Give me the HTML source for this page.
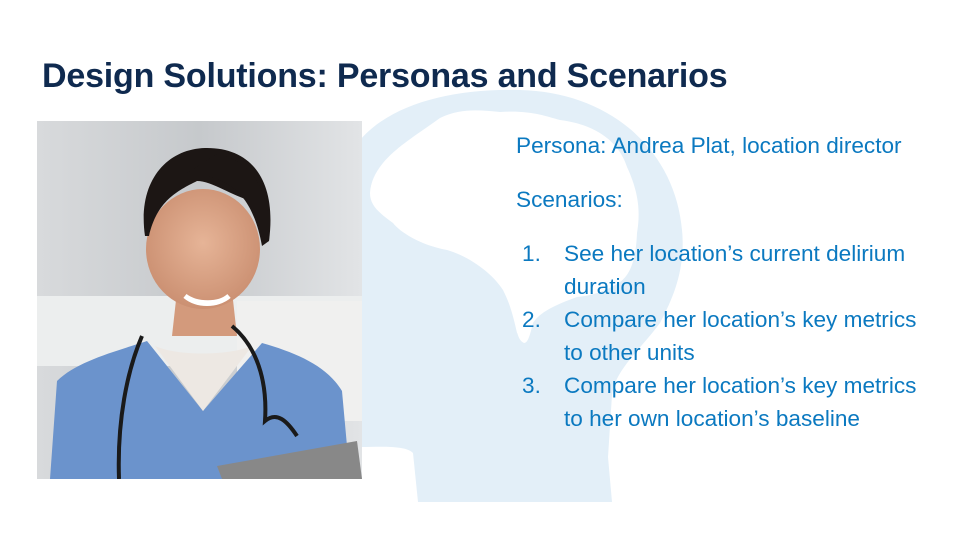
<!DOCTYPE html>
<html><head><meta charset="utf-8"><style>
html,body{margin:0;padding:0}
body{width:960px;height:540px;position:relative;overflow:hidden;background:#fff;font-family:"Source Sans Pro","Liberation Sans",sans-serif}
h1{position:absolute;left:42px;top:57px;margin:0;font-size:34px;font-weight:bold;color:#0f2a4f;letter-spacing:-0.2px}
.t{position:absolute;color:#0b79c0;font-size:22.6px;line-height:33px;white-space:nowrap}
</style></head><body>
<svg width="960" height="540" style="position:absolute;left:0;top:0">
<path d="M360 447 L360 140 C390 105 450 88 520 90 C610 92 675 150 682 230 C686 270 672 300 660 323 C640 350 615 370 612 395 L608 457 L612 502 L418 502 L413 453 C405 445 380 447 360 447 Z" fill="#e3eff8"/>
<path d="M370 193 C372 160 410 140 440 118 C460 108 480 110 500 112 C530 110 545 116 560 120 C600 125 620 145 627 167 C640 195 640 215 637 233 C636 260 630 275 620 282 C600 295 585 296 577 297 C555 305 540 312 533 323 C530 335 528 343 524 343 C518 340 518 333 517 333 C512 310 508 300 503 290 C490 270 465 255 447 250 C420 245 400 232 393 223 C378 212 370 205 370 193 Z" fill="#fff"/>
</svg>
<svg width="325" height="358" style="position:absolute;left:37px;top:121px" viewBox="0 0 325 358">
<defs>
<linearGradient id="bg" x1="0" x2="1"><stop offset="0" stop-color="#d8dadc"/><stop offset="0.5" stop-color="#c6c9cc"/><stop offset="1" stop-color="#e2e4e6"/></linearGradient>
<radialGradient id="sk" cx="0.5" cy="0.45" r="0.6"><stop offset="0" stop-color="#e6b497"/><stop offset="1" stop-color="#c98d6f"/></radialGradient>
</defs>
<rect width="325" height="358" fill="url(#bg)"/>
<rect x="0" y="175" width="325" height="70" fill="#eceeee"/>
<rect x="200" y="180" width="125" height="120" fill="#f0f0ef"/>
<path d="M140 170 L195 170 L200 215 L135 215 Z" fill="#d39a7c"/>
<ellipse cx="166" cy="128" rx="57" ry="60" fill="url(#sk)"/>
<path d="M108 115 C100 60 130 28 168 27 C215 26 240 60 232 120 C225 105 222 90 215 80 C195 75 175 60 160 60 C140 70 120 80 112 115 Z" fill="#1c1614"/>
<path d="M150 52 C190 55 215 70 225 125 L232 120 C235 80 220 40 180 33 Z" fill="#1c1614"/>
<path d="M148 175 C160 185 180 185 192 175 C182 184 160 184 148 175 Z" fill="#fff" stroke="#fff" stroke-width="5"/>
<path d="M13 358 L20 260 C40 240 80 230 110 220 L166 290 L225 222 C260 232 290 245 305 270 L313 358 Z" fill="#6b93cc"/>
<path d="M118 225 L166 290 L215 225 C190 235 140 235 118 225 Z" fill="#ede8e3"/>
<path d="M105 215 C90 250 80 300 82 358" stroke="#1a1a1a" stroke-width="4" fill="none"/>
<path d="M195 205 C225 230 230 270 228 300 C240 290 250 300 260 315" stroke="#1a1a1a" stroke-width="4" fill="none"/>
<path d="M180 345 L320 320 L325 358 L185 358 Z" fill="#888"/>
</svg>
<h1>Design Solutions: Personas and Scenarios</h1>
<div class="t" style="left:516px;top:129px">Persona: Andrea Plat, location director</div>
<div class="t" style="left:516px;top:183px">Scenarios:</div>
<div class="t" style="left:522px;top:237px">1.</div>
<div class="t" style="left:564px;top:237px">See her location’s current delirium<br>duration</div>
<div class="t" style="left:522px;top:303px">2.</div>
<div class="t" style="left:564px;top:303px">Compare her location’s key metrics<br>to other units</div>
<div class="t" style="left:522px;top:369px">3.</div>
<div class="t" style="left:564px;top:369px">Compare her location’s key metrics<br>to her own location’s baseline</div>
</body></html>
